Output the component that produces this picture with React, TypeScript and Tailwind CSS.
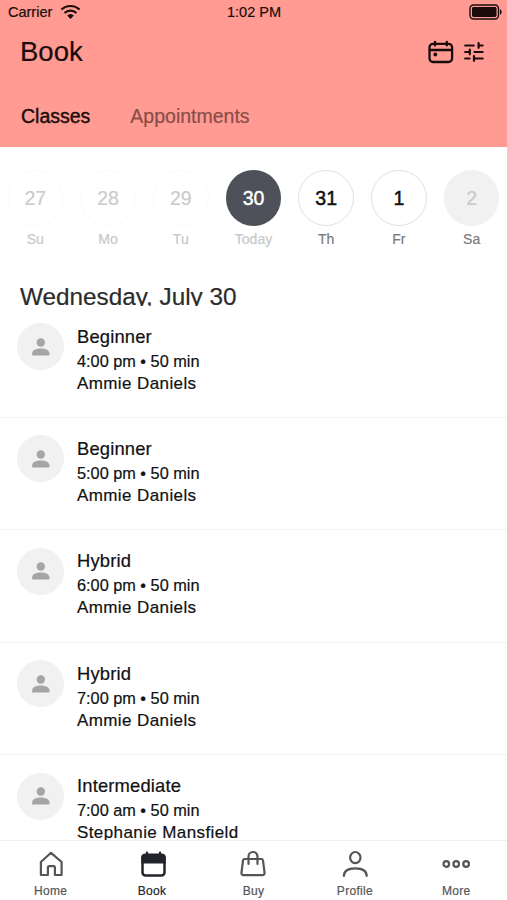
import { clsx } from "clsx";

type DayState = "past" | "today" | "open" | "closed";

const days: { num: string; label: string; state: DayState }[] = [
  { num: "27", label: "Su", state: "past" },
  { num: "28", label: "Mo", state: "past" },
  { num: "29", label: "Tu", state: "past" },
  { num: "30", label: "Today", state: "today" },
  { num: "31", label: "Th", state: "open" },
  { num: "1", label: "Fr", state: "open" },
  { num: "2", label: "Sa", state: "closed" },
];

const classes = [
  { name: "Beginner", time: "4:00 pm", teacher: "Ammie Daniels" },
  { name: "Beginner", time: "5:00 pm", teacher: "Ammie Daniels" },
  { name: "Hybrid", time: "6:00 pm", teacher: "Ammie Daniels" },
  { name: "Hybrid", time: "7:00 pm", teacher: "Ammie Daniels" },
  { name: "Intermediate", time: "7:00 am", teacher: "Stephanie Mansfield" },
];

const circleStyles: Record<DayState, string> = {
  past: "border border-[#fafafa] text-[#cbcbcb]",
  today: "bg-[#4e5159] text-white [-webkit-text-stroke:0.4px_white]",
  open: "border border-[#dfdfdf] text-[#111] [-webkit-text-stroke:0.5px_#111]",
  closed: "bg-[#f1f1f1] text-[#c9c9c9]",
};

function StatusBar() {
  return (
    <div className="grid h-6 grid-cols-3 items-center pl-2 text-[14.5px] leading-6">
      <div className="flex items-center gap-2">
        <span>Carrier</span>
        <svg width="21" height="16" viewBox="0 0 21 16" fill="none" stroke="currentColor" strokeWidth="2.1">
          <path d="M1.4 5.6C6.6.7 14.4.7 19.6 5.6" />
          <path d="M4.5 9c3.4-3.2 8.6-3.2 12 0" />
          <path d="M7.2 11.6a4.8 4.8 0 0 1 6.6 0L10.5 15z" fill="currentColor" stroke="none" />
        </svg>
      </div>
      <span className="-ml-[7px] text-center">1:02 PM</span>
      <svg className="mr-1 justify-self-end" width="34" height="16" viewBox="0 0 34 16">
        <rect x="1" y="1" width="28.5" height="14" rx="3.5" fill="none" stroke="currentColor" strokeWidth="1.4" />
        <rect x="3" y="3" width="24.5" height="10" rx="1.4" fill="currentColor" />
        <path d="M31 5.3c2.2.9 2.2 4.5 0 5.4z" fill="currentColor" />
      </svg>
    </div>
  );
}

function CalendarIcon() {
  return (
    <svg width="26" height="24" viewBox="0 0 26 24" fill="none" stroke="currentColor" strokeWidth="2.3" strokeLinecap="round">
      <rect x="1.5" y="3.8" width="22.6" height="18.2" rx="3.5" />
      <path d="M2 10h22M7 1.8v3.6M18.8 1.8v3.6" />
      <circle cx="7.3" cy="14.5" r="1.9" fill="currentColor" stroke="none" />
    </svg>
  );
}

function FilterIcon() {
  return (
    <svg width="20" height="20" viewBox="0 0 20 20" fill="none" stroke="currentColor" strokeWidth="2.2" strokeLinecap="round">
      <path d="M1.2 3.5h8.6M14.6 1.2v4.6M14.6 3.5h4M1.2 10h4.6M5.8 7.7v4.6M10.5 10h8.2M1.2 16.5h4.3M10 14.2v4.6M10 16.5h8.7" />
    </svg>
  );
}

function Avatar() {
  return (
    <div className="flex size-[47px] shrink-0 items-center justify-center rounded-full bg-[#f1f1f1] text-[#a5a5a5]">
      <svg width="18" height="18" viewBox="0 0 18 18" fill="currentColor">
        <circle cx="8.8" cy="4.5" r="4.2" />
        <path d="M.2 17.5v-2.2c0-3.2 4-4.8 8.6-4.8s8.6 1.6 8.6 4.8v2.2z" />
      </svg>
    </div>
  );
}

const tabs = [
  {
    label: "Home",
    icon: <path d="M3.9 12 14 2.8l10.6 9.2V25h-6.7v-7.4a1.4 1.4 0 0 0-1.4-1.4h-4.2a1.4 1.4 0 0 0-1.4 1.4V25h-7z" />,
  },
  {
    label: "Book",
    active: true,
    icon: (
      <>
        <rect x="4.5" y="4.8" width="22" height="20.6" rx="3" strokeWidth="2.5" />
        <path d="M3.3 7.3A3.3 3.3 0 0 1 6.6 4h17.8a3.3 3.3 0 0 1 3.3 3.3v6.2H3.3z" fill="currentColor" stroke="none" />
        <path d="M9 2.5v3M22 2.5v3" />
      </>
    ),
  },
  {
    label: "Buy",
    icon: (
      <>
        <path d="M5.8 9h16.4c1.2 0 1.7.6 1.8 1.5l1.5 12c.2 1.7-.6 2.6-2.1 2.6H4.600c-1.5 0-2.3-.9-2.1-2.6l1.5-12C4.1 9.600 4.600 9 5.800 9z" />
        <path d="M9.5 14V6.5a4.5 4.5 0 0 1 9 0V14" />
      </>
    ),
  },
  {
    label: "Profile",
    icon: (
      <>
        <ellipse cx="14.3" cy="7.6" rx="5.2" ry="5.6" />
        <path d="M2.9 26c0-5 4.3-7.7 11.4-7.700S25.700 21 25.700 26" />
      </>
    ),
  },
  {
    label: "More",
    icon: (
      <>
        <circle cx="4.300" cy="14" r="2.800" />
        <circle cx="14.200" cy="14" r="2.800" />
        <circle cx="24.100" cy="14" r="2.800" />
      </>
    ),
  },
];

export default function App() {
  return (
    <div className="flex h-[900px] w-[507px] flex-col overflow-hidden bg-white font-['Liberation_Sans',Arial,sans-serif] text-[#111] [-webkit-text-stroke:0.2px_currentColor]">
      <header className="h-[147px] shrink-0 bg-[#ff9b92] text-[#1b0c0b]">
        <StatusBar />
        <div className="flex h-14 items-center justify-between pr-[23px] pl-5">
          <h1 className="text-[27.5px] leading-none">Book</h1>
          <div className="flex items-center gap-[10px]">
            <CalendarIcon />
            <FilterIcon />
          </div>
        </div>
        <div className="flex gap-10 pt-6 pl-[21px] text-[19.5px] leading-6">
          <span className="[-webkit-text-stroke:0.4px_#1b0c0b]">Classes</span>
          <span className="text-[#8b4c48]">Appointments</span>
        </div>
      </header>

      <main className="min-h-0 flex-1 overflow-hidden">
        <div className="-ml-px grid w-[509px] grid-cols-7 pt-[23px]">
          {days.map((day) => (
            <div key={day.num} className="flex flex-col items-center">
              <div className={clsx("flex size-[55.5px] items-center justify-center rounded-full pt-0.5 text-[19.5px]", circleStyles[day.state])}>
                {day.num}
              </div>
              <span
                className={clsx(
                  "mt-[3px] text-[14px] leading-5",
                  day.state === "past" || day.state === "today" ? "text-[#c8c8c8]" : "text-[#7b7b7b]"
                )}
              >
                {day.label}
              </span>
            </div>
          ))}
        </div>

        {/* section header is slightly shorter than its text, so the descenders are cut */}
        <h2 className="mt-8 ml-5 h-[25px] overflow-hidden text-[24.3px] leading-[32px] text-[#2b2b2b]">Wednesday, July 30</h2>

        <ul>
          {classes.map((item) => (
            <li key={item.time} className="flex h-[112.4px] gap-[13px] border-b border-[#f3f3f3] pt-[17.5px] pl-[17px]">
              <Avatar />
              <div className="pt-[2.5px]">
                <p className="text-[18.4px] leading-[22px] tracking-[0.15px]">{item.name}</p>
                <p className="mt-[2px] text-[16.3px] leading-[22px]">{item.time} • 50 min</p>
                <p className="mt-px text-[17px] leading-[22px] tracking-[0.4px]">{item.teacher}</p>
              </div>
            </li>
          ))}
        </ul>
      </main>

      <nav className="grid h-[60px] shrink-0 grid-cols-5 border-t border-[#f0f0f0] bg-white">
        {tabs.map((tab) => (
          <div key={tab.label} className={clsx("flex flex-col items-center pt-[9px]", tab.active ? "text-[#22242a]" : "text-[#555]")}>
            <svg width="28" height="28" viewBox="0 0 28 28" fill="none" stroke="currentColor" strokeWidth="2.2" strokeLinecap="round" strokeLinejoin="round">
              {tab.icon}
            </svg>
            <span className="mt-[5px] text-[12px] leading-4 tracking-[0.3px]">{tab.label}</span>
          </div>
        ))}
      </nav>
    </div>
  );
}
